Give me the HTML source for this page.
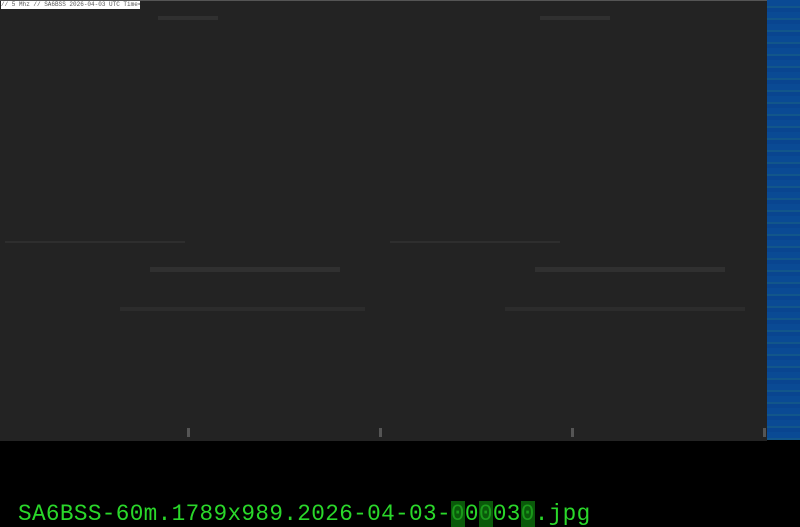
<!DOCTYPE html>
<html><head><style>
html,body{margin:0;padding:0;background:#000;width:800px;height:525px;overflow:hidden}
#wf{position:absolute;left:0;top:0;width:767px;height:440px;background:#232323;border-top:1px solid #555}
#blue{position:absolute;left:767px;top:0;width:33px;height:440px;background:#0a4a94;background-image:repeating-linear-gradient(180deg,#0a4a94 0 6px,#12568a 6px 8px,#094590 8px 12px)}
#lbl{position:absolute;left:1px;top:1px;width:139px;height:8px;background:#fff;font:6px "Liberation Mono",monospace;color:#555;line-height:8px;white-space:nowrap;overflow:hidden}
.s{position:absolute;height:2px;background:#333}
#fn{position:absolute;left:18px;top:501px;font:22.7px "Liberation Mono",monospace;color:#2ad82a;white-space:nowrap;letter-spacing:0.35px}
.hl{background:#0a5a0a;color:#1a9a1a}
</style></head><body>
<div id="wf"></div>
<div id="blue"></div>
<div id="lbl">// 5 Mhz // SA6BSS 2026-04-03 UTC Time=00:00</div>
<div class="s" style="left:158px;top:16px;width:60px;height:4px;background:#303030"></div>
<div class="s" style="left:540px;top:16px;width:70px;height:4px;background:#303030"></div>
<div class="s" style="left:5px;top:241px;width:180px;background:#2e2e2e"></div>
<div class="s" style="left:390px;top:241px;width:170px;background:#2e2e2e"></div>
<div class="s" style="left:150px;top:267px;width:190px;height:5px;background:#303030"></div>
<div class="s" style="left:535px;top:267px;width:190px;height:5px;background:#303030"></div>
<div class="s" style="left:120px;top:307px;width:245px;height:4px;background:#2c2c2c"></div>
<div class="s" style="left:505px;top:307px;width:240px;height:4px;background:#2c2c2c"></div>
<div class="s" style="left:187px;top:428px;width:3px;height:9px;background:#555"></div>
<div class="s" style="left:379px;top:428px;width:3px;height:9px;background:#555"></div>
<div class="s" style="left:571px;top:428px;width:3px;height:9px;background:#555"></div>
<div class="s" style="left:763px;top:428px;width:3px;height:9px;background:#555"></div>
<div id="fn">SA6BSS-60m.1789x989.2026-04-03-<span class="hl">0</span>0<span class="hl">0</span>03<span class="hl">0</span>.jpg</div>
</body></html>
